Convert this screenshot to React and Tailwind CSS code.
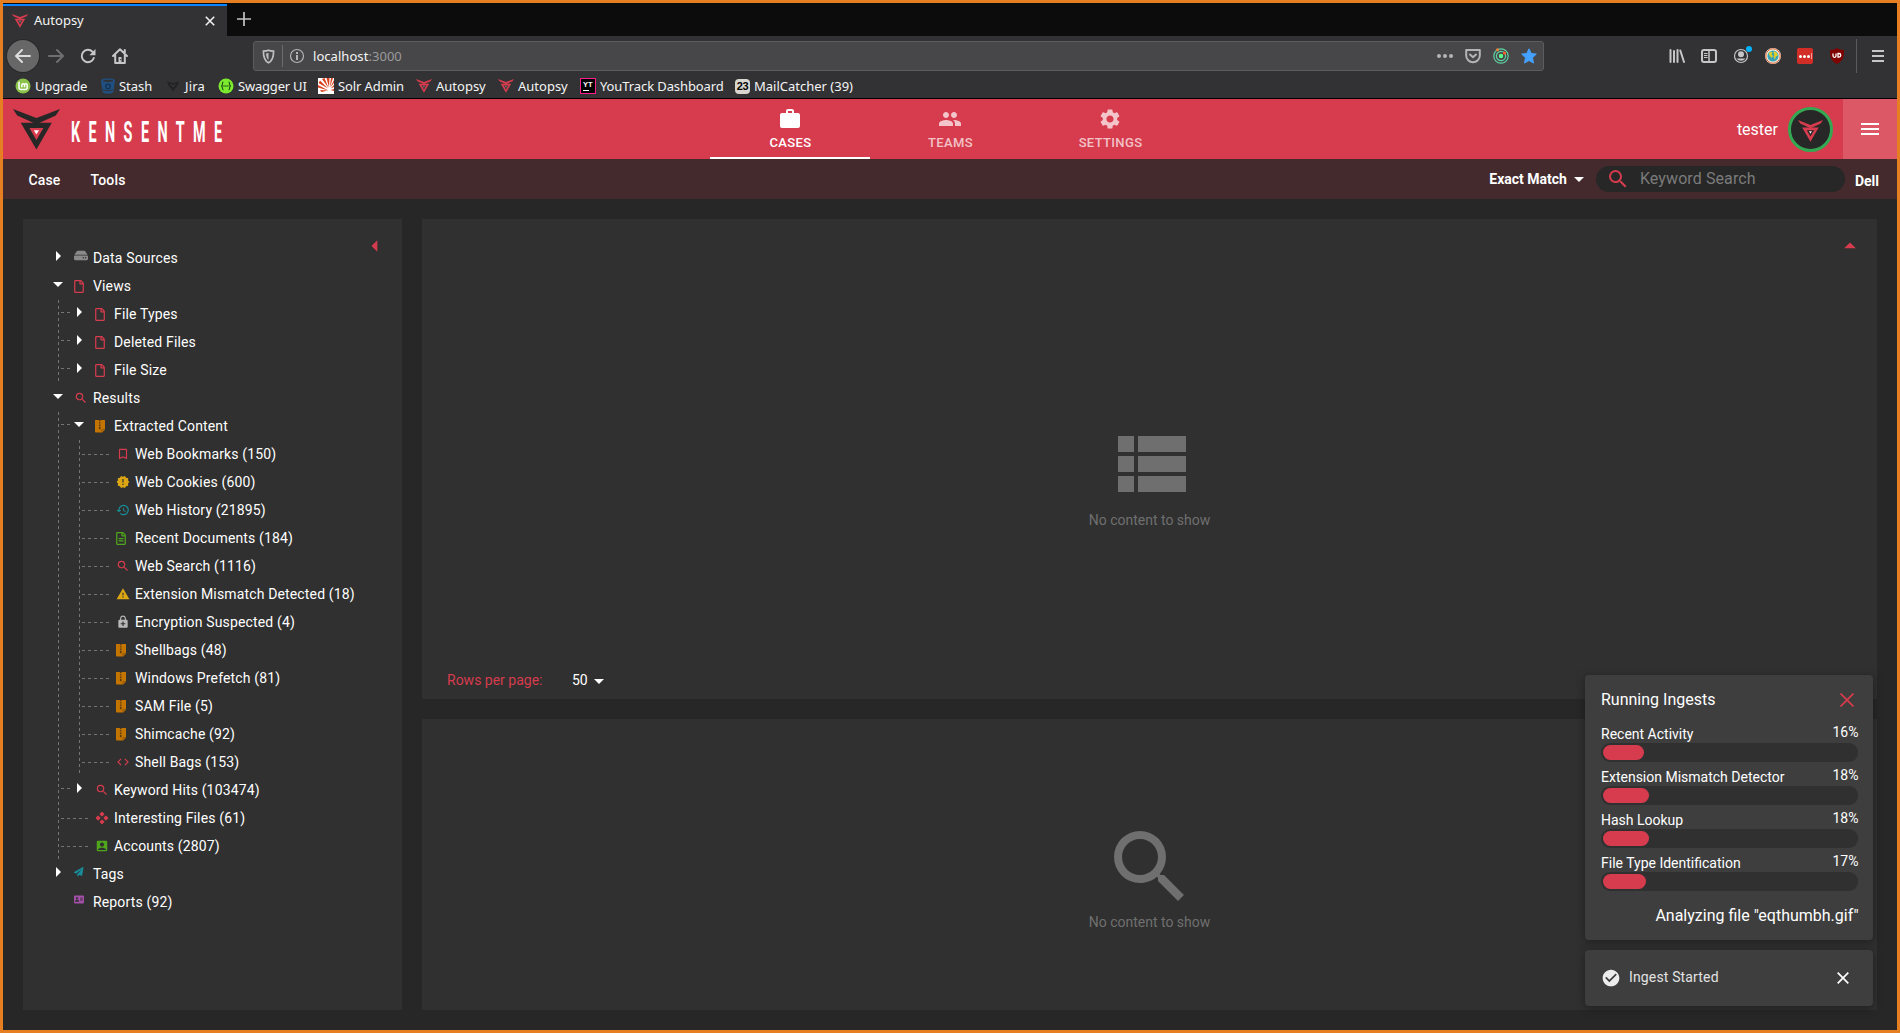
import React from "react";
import {
  MdAccountBox, MdArrowDropDown, MdArrowDropUp, MdArrowLeft, MdArrowRight, MdBookmarkBorder,
  MdCheckCircle, MdCode, MdEnhancedEncryption, MdGroup, MdHistory, MdMenu,
  MdNewReleases, MdSearch, MdSettings, MdWarning, MdWork,
} from "react-icons/md";
import { FaAddressCard, FaHdd, FaPaperPlane, FaRegFile, FaRegFileAlt } from "react-icons/fa";

function Mark({ className, body, eye, pupil }) {
  return (
    <svg viewBox="0 0 47 41" className={className}>
      <path fill={body} d="M0 0 23.4 9 47 0l-4.2 6.6-19.4 8.6L4.2 6.6z" />
      <path fill={body} d="M7.8 13.8h31L23.4 40.5z" />
      <path fill={eye} d="M16.4 19h14L23.4 31z" />
      <path fill={pupil} d="M20.8 21.2h5.2l-2.6 4.4z" />
    </svg>
  );
}

const RedMark = () => <Mark className="w-4 h-[14px]" body="#d63c4d" eye="#323234" pupil="#b9a0a4" />;

function MintIcon() {
  return (
    <svg viewBox="0 0 16 16" className="size-4">
      <circle cx="8" cy="8" r="7.5" fill="#8bc34a" />
      <path d="M4 3.800v5.800a2 2 0 0 0 2 2h4.200a2 2 0 0 0 2-2V7.200a1.300 1.300 0 0 0-2.700 0v2M9.500 9.200v-2a1.300 1.300 0 0 0-2.700 0v2" fill="none" stroke="#fff" strokeWidth="1.500" />
    </svg>
  );
}
function StashIcon() {
  return (
    <svg viewBox="0 0 16 16" className="size-4">
      <path d="M1 2.6C1 1.2 4 .4 8 .4s7 .8 7 2.2l-1.6 11.2C13 15 11 15.8 8 15.8s-5-.8-5.4-2z" fill="#205081" />
      <ellipse cx="8" cy="2.8" rx="5" ry="1.1" fill="#323234" />
      <circle cx="8" cy="8.4" r="2.2" fill="none" stroke="#15324f" strokeWidth="1.3" />
      <path d="M3 11.6c3 1.6 7 1.6 10 0" stroke="#323234" fill="none" />
    </svg>
  );
}
function JiraIcon() {
  return (
    <svg viewBox="0 0 16 16" className="size-4">
      <path d="M2 3.500 8 5l6-1.500-1.500 4L8 13.500 3.500 7.500z" fill="#232325" />
      <path d="m6 6 2 3 2-3" fill="none" stroke="#3a3a3c" />
    </svg>
  );
}
function SwaggerIcon() {
  return (
    <svg viewBox="0 0 16 16" className="size-4">
      <circle cx="8" cy="8" r="7.5" fill="#7cea2e" />
      <path d="M5.500 4C4 4 4.600 6 4.300 7 4.100 7.800 3.500 8 3 8c.5 0 1.100.2 1.300 1 .3 1-.3 3 1.200 3M10.500 4c1.500 0 .9 2 1.200 3 .2.8.8 1 1.300 1-.5 0-1.100.2-1.300 1-.3 1 .3 3-1.200 3" fill="none" stroke="#1d4b14" strokeWidth="1.100" />
      <path d="M5.500 8h5" stroke="#1d4b14" strokeWidth="1.300" strokeDasharray="1.100 .8" />
    </svg>
  );
}
function SolrIcon() {
  return (
    <svg viewBox="0 0 16 16" className="size-4">
      <path d="M0 0h16v16H0z" fill="#fff" />
      <path d="M10.500 12.500 0 9.500V7zM10 10.500 .5 5 2 2.500zM10.500 10 4 1l2.500-1zM11 9.500 8.500 0h3zM11.700 9.500 13 0h2zM12.200 9.500 16 2v3zM12.500 10.500 16 7v2zM10 12.500 2 12l1.500 2z" fill="#d9411e" />
      <path d="M12.500 12 16 11v2z" fill="#d9411e" />
    </svg>
  );
}
function YouTrackIcon() {
  return (
    <div className="flex size-4 flex-col border border-[#ff1e8c] bg-black pl-[2px] pt-[2px]">
      <span className="font-['Liberation_Sans'] text-[7.5px] font-bold leading-[7px] text-white">YT</span>
      <span className="mt-[2px] h-px w-[6px] bg-white" />
    </div>
  );
}
function MailIcon() {
  return (
    <div className="flex size-[15px] items-center justify-center rounded-[4px] bg-[#d9d6d0] font-['Liberation_Sans'] text-[11px] font-bold leading-none tracking-[-0.3px] text-black">
      23
    </div>
  );
}

const bookmarks = [
  { label: "Upgrade", icon: <MintIcon />, w: "w-[85px] tracking-[-0.15px]" },
  { label: "Stash", icon: <StashIcon />, w: "w-[65px] tracking-[-0.05px] gap-[3px]" },
  { label: "Jira", icon: <JiraIcon />, w: "w-[53px] tracking-[0.2px]" },
  { label: "Swagger UI", icon: <SwaggerIcon />, w: "w-[100px] tracking-[-0.2px] gap-[4px]" },
  { label: "Solr Admin", icon: <SolrIcon />, w: "w-[98px] tracking-[-0.1px]" },
  { label: "Autopsy", icon: <RedMark />, w: "w-[82px]" },
  { label: "Autopsy", icon: <RedMark />, w: "w-[82px]" },
  { label: "YouTrack Dashboard", icon: <YouTrackIcon />, w: "w-[155px] tracking-[-0.1px]" },
  { label: "MailCatcher (39)", icon: <MailIcon />, w: "w-[130px]" },
];

const line = { fill: "none", stroke: "#c6c6c7", strokeWidth: 2, strokeLinecap: "round", strokeLinejoin: "round" };

function NavButtons() {
  return (
    <div className="flex w-[250px] items-center pl-1">
      <div className="flex size-8 items-center justify-center rounded-full bg-[#676768] ring-1 ring-[#29292a]">
        <svg viewBox="0 0 16 16" className="size-4"><path {...line} stroke="#dcdcdc" d="M15 8H1.500M7 2 1 8l6 6" /></svg>
      </div>
      <svg viewBox="0 0 16 16" className="ml-[9px] size-4"><path {...line} stroke="#6f6f70" d="M1 8h13.500M9 2l6 6-6 6" /></svg>
      <svg viewBox="0 0 16 16" className="ml-4 size-4">
        <path {...line} d="M13.800 10A6.200 6.200 0 1 1 12.600 3.800L14 5.200" />
        <path d="M15.500 1v6.200H9.300z" fill="#c6c6c7" />
      </svg>
      <svg viewBox="0 0 16 16" className="ml-4 size-4">
        <path {...line} d="M1 8 8 1.200 15 8M3.200 7v8h9.600V7M12.800 2v3" />
        <path d="M6.500 9h3v6h-3z" fill="#c6c6c7" />
        <path d="M8.200 11h.9v1.300h-.9z" fill="#323234" />
      </svg>
    </div>
  );
}

function UrlBar() {
  return (
    <div className="flex h-[30px] w-[1291px] items-center rounded-[3px] border border-[#5c5c5e] bg-[#474749] pl-2 pr-[6px]">
      <svg viewBox="0 0 14 16" className="h-[15px] w-[13px]">
        <path d="M7 1.200c2 .9 3.800 1 5.500 1.100 0 6.500-1 10.200-5.500 12.500C2.500 12.500 1.500 8.800 1.500 2.300 3.200 2.200 5 2.100 7 1.200z" fill="none" stroke="#c0c0c1" strokeWidth="1.800" />
        <path d="M7 4.300v7.400C5 10.300 4.500 8 4.400 4.900z" fill="#c0c0c1" />
      </svg>
      <span className="ml-[7px] h-[22px] w-px bg-[#6a6a72]" />
      <svg viewBox="0 0 16 16" className="ml-[6px] size-4">
        <circle cx="8" cy="8" r="6.500" fill="none" stroke="#b4b4b5" strokeWidth="1.200" />
        <path d="M7 7h2v5H7zM7 4h2v2H7z" fill="#b4b4b5" />
      </svg>
      <div className="ml-2 mt-px text-[13px] tracking-[0.05px] text-[#f4f4f4]">
        localhost<span className="text-[#9a9a9b]">:3000</span>
      </div>
      <div className="ml-auto flex items-center gap-3">
        <svg viewBox="0 0 16 16" className="size-4" fill="#b4b4b5"><circle cx="2" cy="8" r="2" /><circle cx="8" cy="8" r="2" /><circle cx="14" cy="8" r="2" /></svg>
        <svg viewBox="0 0 16 16" className="size-4">
          <path {...line} stroke="#b4b4b5" d="M1.200 2h13.600v5.500a6.800 6.800 0 0 1-13.600 0zM5 6.500 8 9.300l3-2.800" />
        </svg>
        <svg viewBox="0 0 16 16" className="size-4" fill="none" stroke="#5fd3a2">
          <circle cx="8" cy="8" r="7.200" strokeWidth="1.200" />
          <circle cx="8" cy="8" r="4.600" strokeWidth="1.200" />
          <circle cx="8" cy="8" r="2.200" fill="#5dfc8c" stroke="none" />
          <circle cx="4.500" cy="1.800" r="1.500" fill="#f3813a" stroke="none" />
          <circle cx="11.500" cy="5" r="1.600" fill="#ff5a2a" stroke="none" />
        </svg>
        <svg viewBox="0 0 16 16" className="size-4"><path fill="#45a1ff" stroke="#45a1ff" strokeLinejoin="round" d="m8 .8 2.200 4.700 5.100.6-3.800 3.600 1 5.400L8 12.500l-4.500 2.600 1-5.400L.7 6.100l5.100-.6z" /></svg>
      </div>
    </div>
  );
}

function ExtensionIcons() {
  return (
    <div className="ml-auto flex items-center">
      <div className="flex items-center gap-4">
        <svg viewBox="0 0 16 16" className="size-4" stroke="#c6c6c7" strokeWidth="2" strokeLinecap="round"><path d="M1.500 2v12M5 3v11M8.500 2v12M11.300 2.500 15 14" /></svg>
        <svg viewBox="0 0 16 16" className="size-4" fill="none" stroke="#c6c6c7">
          <rect x="1" y="2" width="14" height="12" rx="2" strokeWidth="2" />
          <path d="M8 2v12" strokeWidth="1.500" /><path d="M3 5.500h3.500M3 7.500h3.500M3 9.500h3.500" />
        </svg>
        <div className="relative size-4">
          <svg viewBox="0 0 16 16" className="size-4">
            <circle cx="8" cy="8" r="6.500" fill="none" stroke="#c6c6c7" strokeWidth="1.200" />
            <circle cx="8" cy="6.300" r="3" fill="#c6c6c7" />
            <path d="M3.500 10.500h9a5.500 5.500 0 0 1-9 0z" fill="#c6c6c7" />
          </svg>
          <span className="absolute -right-[3px] -top-[2px] size-[6px] rounded-full bg-[#00b3ff]" />
        </div>
        <svg viewBox="0 0 16 16" className="size-4">
          <circle cx="8" cy="8" r="8" fill="#f3efe6" /><circle cx="8" cy="8" r="7.200" fill="none" stroke="#e0662f" />
          <circle cx="8" cy="8" r="5.600" fill="#35a3b5" />
          <path d="M3.500 5.500 6 3.500l1.500.8-1 2L8 8l-1.500 2L5 8zM9 3.200l3 1.500.8 3-2 .8-.8 3.200-1.500-3.200L9.500 7 8.500 5z" fill="#e3cf2a" />
        </svg>
        <div className="flex size-4 items-center justify-center gap-px rounded-[2px] bg-[#d32d27]">
          <span className="size-[3px] rounded-full bg-white" /><span className="size-[3px] rounded-full bg-white" /><span className="size-[3px] rounded-full bg-white" /><span className="h-[6px] w-px bg-[#f0a0a0]" />
        </div>
        <svg viewBox="0 0 16 16" className="size-4">
          <path d="M8 0c2 1.500 4.500 2 7 2 0 7-1 11-7 14C2 13 1 9 1 2c2.500 0 5-.5 7-2z" fill="#800000" />
          <path d="M4 5.500v2.300a1.500 1.500 0 0 0 3 0V5.500M9 5.500v3.600h1a1.700 1.700 0 0 0 0-3.600z" fill="none" stroke="#fff" strokeWidth="1.300" />
        </svg>
      </div>
      <span className="ml-[11px] h-[34px] w-px bg-[#5b5b5d]" />
      <div className="ml-[15px] mr-[13px] flex w-3 flex-col gap-[3px]">
        <span className="h-[2px] bg-[#c6c6c7]" /><span className="h-[2px] bg-[#c6c6c7]" /><span className="h-[2px] bg-[#c6c6c7]" />
      </div>
    </div>
  );
}

function Browser() {
  return (
    <div className="h-24 shrink-0 border-b border-black bg-[#323234] font-['Noto_Sans',sans-serif] text-[#f4f4f4]">
      <div className="flex h-[33px] bg-[#0c0c0c] pt-px">
        <div className="flex w-[224px] items-center border-t-2 border-[#0a84ff] bg-[#323234] pl-[9px] pr-3 text-[13px]">
          <RedMark />
          <span className="ml-[6px]">Autopsy</span>
          <svg viewBox="0 0 10 10" className="ml-auto size-[10px]"><path d="m.8.8 8.400 8.400M9.200.8.8 9.200" stroke="#f0f0f0" strokeWidth="1.600" /></svg>
        </div>
        <svg viewBox="0 0 14 14" className="ml-[10px] mt-2 size-[14px]"><path d="M7 0v14M0 7h14" stroke="#c4c4c4" strokeWidth="1.700" /></svg>
      </div>
      <div className="flex h-10 items-center"><NavButtons /><UrlBar /><ExtensionIcons /></div>
      <div className="flex h-[20px] items-center pl-3 text-[13px] leading-none">
        {bookmarks.map((b, i) => (
          <div key={i} className={"flex shrink-0 items-center gap-1 whitespace-nowrap " + b.w}>{b.icon}<span>{b.label}</span></div>
        ))}
      </div>
    </div>
  );
}

function NavTab({ icon: Icon, label, active }) {
  return (
    <div className={"flex h-[60px] w-40 flex-col items-center border-b-2 pt-2 " + (active ? "border-white text-white" : "border-transparent text-white/70")}>
      <Icon className="size-6" />
      <span className="ml-px mt-[2px] text-[13px] font-medium leading-5 tracking-[0.35px]">{label}</span>
    </div>
  );
}

function Header() {
  return (
    <div className="flex h-[60px] shrink-0 bg-[#d63c4d] text-white">
      <div className="flex w-[707px] pl-[10px] pt-[10px]">
        <Mark className="h-[41px] w-[47px]" body="#272727" eye="#d63c4d" pupil="#fff" />
        <span className="ml-[11px] mt-[7px] origin-left scale-x-[0.48] text-[30px] font-bold leading-[32px] tracking-[17.500px]">KENSENTME</span>
      </div>
      <NavTab icon={MdWork} label="CASES" active />
      <NavTab icon={MdGroup} label="TEAMS" />
      <NavTab icon={MdSettings} label="SETTINGS" />
      <div className="ml-auto flex items-center">
        <span className="mt-[2px] text-base">tester</span>
        <div className="ml-[10px] mr-[10px] flex size-[45px] items-center justify-center rounded-full border-[3px] border-[#34a853] bg-[#272727] pt-1">
          <Mark className="h-[22px] w-[25px]" body="#d63c4d" eye="#272727" pupil="#fff" />
        </div>
        <div className="flex h-full w-[54px] items-center justify-center bg-[#dd5867]"><MdMenu className="size-6" /></div>
      </div>
    </div>
  );
}

function SubHeader() {
  return (
    <div className="flex h-10 shrink-0 items-center bg-[#442a2d] pl-[25.500px] text-sm font-medium text-white">
      <span className="mt-px tracking-[0.15px]">Case</span>
      <span className="ml-[30px] mt-px tracking-[0.15px]">Tools</span>
      <div className="ml-auto flex items-center font-bold">
        Exact Match
        <MdArrowDropDown className="size-6" />
      </div>
      <div className="ml-[5px] flex h-[26px] w-[249px] items-center rounded-full bg-[#272727] pl-[10px]">
        <MdSearch className="size-6 text-[#d63c4d]" />
        <span className="ml-[10px] text-base font-normal leading-6 tracking-[0.1px] text-[#7b7b7b]">Keyword Search</span>
      </div>
      <span className="ml-[10px] mr-[18px] mt-[3px] font-bold">Dell</span>
    </div>
  );
}

function ArchiveIcon() {
  return (
    <svg viewBox="0 0 10 13" className="h-[13px] w-[10px]">
      <path d="M0 0h10v9.500L7.200 12.500H.8a.8.8 0 0 1-.8-.8z" fill="#c47400" />
      <path d="M6.900 12.500V9.700H10" fill="none" stroke="#7d4f0a" strokeWidth=".7" />
      <path d="M4.700 0v7" stroke="#5c3d10" strokeWidth="1.500" strokeDasharray="1 .7" />
      <path d="M3.900 7h1.700v2.200H3.900z" fill="#5c3d10" />
    </svg>
  );
}

function GamepadIcon() {
  return (
    <svg viewBox="0 0 14 14" className="size-[14px]">
      <path
        d="M7 1.300 8.800 3.100 7 4.900 5.200 3.100zM7 9.100l1.800 1.800L7 12.700l-1.800-1.800zM3.100 5.200 4.900 7 3.100 8.800 1.300 7zM10.900 5.200 12.700 7l-1.800 1.800L9.100 7z"
        fill="#d63c4d" stroke="#d63c4d" strokeWidth="1.100" strokeLinejoin="round"
      />
    </svg>
  );
}

function ListIcon({ className }) {
  return (
    <svg viewBox="0 0 24 24" className={className} fill="currentColor">
      <path d="M4 14h4v-4H4v4zm0 5h4v-4H4v4zM4 9h4V5H4v4zm5 5h12v-4H9v4zm0 5h12v-4H9v4zM9 5v4h12V5H9z" />
    </svg>
  );
}

const file = <FaRegFile className="h-[13px] w-[10px] text-[#d63c4d]" />;
const search = <MdSearch className="size-[14px] text-[#d63c4d]" />;
const zip = <ArchiveIcon />;

const tree = [
  { label: "Data Sources", open: false, icon: <FaHdd className="-mt-[5px] h-[13px] w-[14px] text-[#8a8a8a]" /> },
  {
    label: "Views", open: true, icon: file,
    children: [
      { label: "File Types", open: false, icon: file },
      { label: "Deleted Files", open: false, icon: file },
      { label: "File Size", open: false, icon: file },
    ],
  },
  {
    label: "Results", open: true, icon: search,
    children: [
      {
        label: "Extracted Content", open: true, icon: zip,
        children: [
          { label: "Web Bookmarks (150)", icon: <MdBookmarkBorder className="size-[14px] text-[#d63c4d]" /> },
          { label: "Web Cookies (600)", icon: <MdNewReleases className="size-[14px] text-[#dba514]" /> },
          { label: "Web History (21895)", icon: <MdHistory className="size-[14px] text-[#178f9a]" /> },
          { label: "Recent Documents (184)", icon: <FaRegFileAlt className="h-[13px] w-[10px] text-[#4fa51c]" /> },
          { label: "Web Search (1116)", icon: search },
          { label: "Extension Mismatch Detected (18)", icon: <MdWarning className="size-[14px] text-[#dba514]" /> },
          { label: "Encryption Suspected (4)", icon: <MdEnhancedEncryption className="size-[14px] text-[#b8b8b8]" /> },
          { label: "Shellbags (48)", icon: zip },
          { label: "Windows Prefetch (81)", icon: zip },
          { label: "SAM File (5)", icon: zip },
          { label: "Shimcache (92)", icon: zip },
          { label: "Shell Bags (153)", icon: <MdCode className="size-[14px] text-[#d63c4d]" /> },
        ],
      },
      { label: "Keyword Hits (103474)", open: false, icon: search },
      { label: "Interesting Files (61)", icon: <GamepadIcon /> },
      { label: "Accounts (2807)", icon: <MdAccountBox className="size-[14px] text-[#4fa51c]" /> },
    ],
  },
  { label: "Tags", open: false, icon: <FaPaperPlane className="-mt-[4px] size-[9.5px] text-[#178f9a]" /> },
  { label: "Reports (92)", icon: <FaAddressCard className="-mt-[6px] h-[9px] w-[10px] text-[#a44fa8]" /> },
];

const dashX = "bg-[repeating-linear-gradient(to_right,#757575_0_3px,transparent_3px_6px)]";
const dashY = "bg-[repeating-linear-gradient(to_bottom,#757575_0_3px,transparent_3px_6px)]";

function TreeNode({ node, nested }) {
  const leaf = node.open === undefined;
  return (
    <li>
      <div className="relative flex h-7 items-center">
        {nested && (
          <span className={"absolute h-px " + dashX + (leaf ? " -left-[6px] top-[14px] w-[27px]" : " -left-[6px] top-3 w-[9px]")} />
        )}
        <span className="h-6 w-7 shrink-0 self-start">
          {!leaf && (node.open ? <MdArrowDropDown className="size-6" /> : <MdArrowRight className="size-6" />)}
        </span>
        <span className="flex w-[19px] shrink-0 items-center">{node.icon}</span>
        <span className="whitespace-nowrap tracking-[0.15px]">{node.label}</span>
      </div>
      {node.children && (
        <div className="flex">
          <span className={"ml-3 w-px " + dashY} />
          <ul className="ml-2">{node.children.map((c) => <TreeNode key={c.label} node={c} nested />)}</ul>
        </div>
      )}
    </li>
  );
}

function EmptyState({ icon: Icon, className, textClass }) {
  return (
    <div className={"flex flex-col items-center text-sm text-[#6f6f6f] " + className}>
      <Icon className="ml-px size-24" />
      <span className={textClass}>No content to show</span>
    </div>
  );
}

const ingests = [
  { name: "Recent Activity", pct: "16%", width: 41 },
  { name: "Extension Mismatch Detector", pct: "18%", width: 46 },
  { name: "Hash Lookup", pct: "18%", width: 46 },
  { name: "File Type Identification", pct: "17%", width: 43 },
];

function Toasts() {
  return (
    <div className="absolute right-6 top-[672px] flex w-72 flex-col gap-[10px] text-white">
      <div className="h-[265px] rounded bg-[#3e3e3e] pl-4 pr-[15px] pt-[13px] shadow-[0_2px_10px_rgba(0,0,0,0.35)]">
        <div className="flex h-6 items-center justify-between">
          <span className="text-base">Running Ingests</span>
          <svg viewBox="0 0 14 14" className="mr-1 size-[14px]"><path d="m.5.5 13 13m0-13-13 13" stroke="#d63c4d" strokeWidth="1.700" /></svg>
        </div>
        <div className="mt-[11px]">
          {ingests.map((r) => (
            <div key={r.name} className="h-[43px] text-sm">
              <div className="flex h-5 justify-between leading-5">
                <span className="mt-px">{r.name}</span>
                <span className="-mr-[0.500px] -mt-px">{r.pct}</span>
              </div>
              <div className="h-[19px] rounded-[9px] bg-[#303030] p-[2px]">
                <div className="h-[15px] rounded-full bg-[#d63c4d]" style={{ width: r.width }} />
              </div>
            </div>
          ))}
        </div>
        <div className="-mr-[0.500px] mt-[9px] text-right text-base leading-6">Analyzing file "eqthumbh.gif"</div>
      </div>
      <div className="flex h-14 items-center rounded bg-[#3e3e3e] pl-4 pr-6 text-sm shadow-[0_2px_10px_rgba(0,0,0,0.35)]">
        <MdCheckCircle className="size-5 text-[#ededed]" />
        <span className="ml-2 mb-[2px] tracking-[0.15px] text-[#e2e2e2]">Ingest Started</span>
        <svg viewBox="0 0 12 12" className="ml-auto size-3"><path d="m.7.700 10.600 10.600m0-10.600L.7 11.300" stroke="#fff" strokeWidth="1.700" /></svg>
      </div>
    </div>
  );
}

export default function App() {
  return (
    <div className="relative flex h-[1033px] w-[1900px] flex-col overflow-hidden border-[3px] border-[#e67e22] bg-[#272727] font-[Roboto,sans-serif]">
      <Browser />
      <Header />
      <SubHeader />
      <div className="flex min-h-0 flex-1 gap-5 p-5 text-sm text-white">
        <div className="relative w-[379px] shrink-0 bg-[#303030] pl-[23px] pt-[25px]">
          <ul>{tree.map((n) => <TreeNode key={n.label} node={n} />)}</ul>
          <MdArrowLeft className="absolute right-[13px] top-[13px] size-7 text-[#d63c4d]" />
        </div>
        <div className="flex flex-1 flex-col gap-5">
          <div className="relative flex h-[480px] flex-col bg-[#303030]">
            <MdArrowDropUp className="absolute right-[13px] top-[13px] size-7 text-[#d63c4d]" />
            <EmptyState icon={ListIcon} className="pt-[197px]" textClass="-mt-[2px]" />
            <div className="mt-auto mb-[7px] flex h-6 items-center pl-[25px]">
              <span className="w-[125px] text-[#d63c4d]">Rows per page:</span>
              <span>50</span>
              <MdArrowDropDown className="-ml-px mt-px size-6" />
            </div>
          </div>
          <div className="flex-1 bg-[#303030]">
            <EmptyState icon={MdSearch} className="pt-[100px]" textClass="-mt-[3px]" />
          </div>
        </div>
      </div>
      <Toasts />
    </div>
  );
}
